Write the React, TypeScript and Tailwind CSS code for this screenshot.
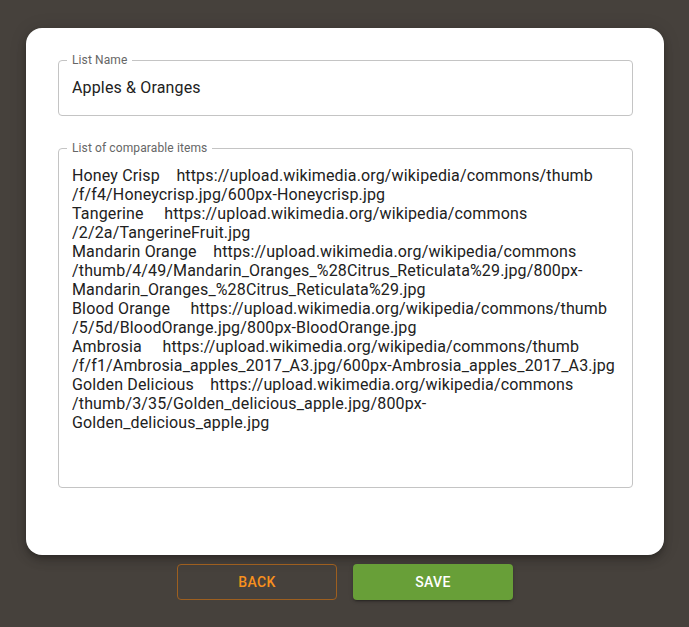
import React from 'react';

// lines broken where the reference wraps them
const items = [
  'Honey Crisp    https://upload.wikimedia.org/wikipedia/commons/thumb',
  '/f/f4/Honeycrisp.jpg/600px-Honeycrisp.jpg',
  'Tangerine     https://upload.wikimedia.org/wikipedia/commons',
  '/2/2a/TangerineFruit.jpg',
  'Mandarin Orange    https://upload.wikimedia.org/wikipedia/commons',
  '/thumb/4/49/Mandarin_Oranges_%28Citrus_Reticulata%29.jpg/800px-',
  'Mandarin_Oranges_%28Citrus_Reticulata%29.jpg',
  'Blood Orange     https://upload.wikimedia.org/wikipedia/commons/thumb',
  '/5/5d/BloodOrange.jpg/800px-BloodOrange.jpg',
  'Ambrosia     https://upload.wikimedia.org/wikipedia/commons/thumb',
  '/f/f1/Ambrosia_apples_2017_A3.jpg/600px-Ambrosia_apples_2017_A3.jpg',
  'Golden Delicious    https://upload.wikimedia.org/wikipedia/commons',
  '/thumb/3/35/Golden_delicious_apple.jpg/800px-',
  'Golden_delicious_apple.jpg',
].join('\n');

export default function App() {
  return (
    <div className="min-h-screen w-full bg-[#46413c] pt-[28px] font-['Roboto',sans-serif]">
      {/* Card */}
      <div className="ml-[26px] w-[638px] rounded-[16px] bg-white pl-8 pr-[31px] pt-[26px] pb-[67px] shadow-[0_3px_5px_-1px_rgba(0,0,0,0.2),0_6px_10px_0_rgba(0,0,0,0.14),0_1px_18px_0_rgba(0,0,0,0.12)]">
        {/* List name */}
        <fieldset className="m-0 rounded border border-[#c4c4c4] px-[13px] pt-[10px] pb-[16px]">
          <legend className="ml-[-5px] px-[5px] text-[12px] leading-[12px] tracking-[0.00938em] text-[#666666]">
            List Name
          </legend>
          <input
            className="block h-[23px] w-full bg-transparent text-[16px] leading-[23px] tracking-[0.00938em] text-[#212121] outline-none"
            defaultValue="Apples & Oranges"
          />
        </fieldset>

        {/* Items */}
        <fieldset className="m-0 mt-[26px] rounded border border-[#c4c4c4] px-[13px] pt-[11px] pb-[16px]">
          <legend className="ml-[-5px] px-[5px] text-[12px] leading-[12px] tracking-[0.00938em] text-[#666666]">
            List of comparable items
          </legend>
          <textarea
            className="block h-[306px] w-full resize-none overflow-hidden whitespace-pre bg-transparent pt-[1px] text-[16px] leading-[19px] tracking-[0.00938em] text-[#212121] outline-none"
            defaultValue={items}
          />
        </fieldset>
      </div>

      {/* Actions */}
      <div className="mt-[9px] flex justify-center gap-4 pl-[1px]">
        <button className="h-9 w-40 rounded border border-[#9e5f1f] text-[14px] font-medium uppercase tracking-[0.02857em] text-[#f7901e]">
          Back
        </button>
        <button className="h-9 w-40 rounded bg-[#689f38] text-[14px] font-medium uppercase tracking-[0.02857em] text-white shadow-[0_3px_1px_-2px_rgba(0,0,0,0.2),0_2px_2px_0_rgba(0,0,0,0.14),0_1px_5px_0_rgba(0,0,0,0.12)]">
          Save
        </button>
      </div>
    </div>
  );
}
